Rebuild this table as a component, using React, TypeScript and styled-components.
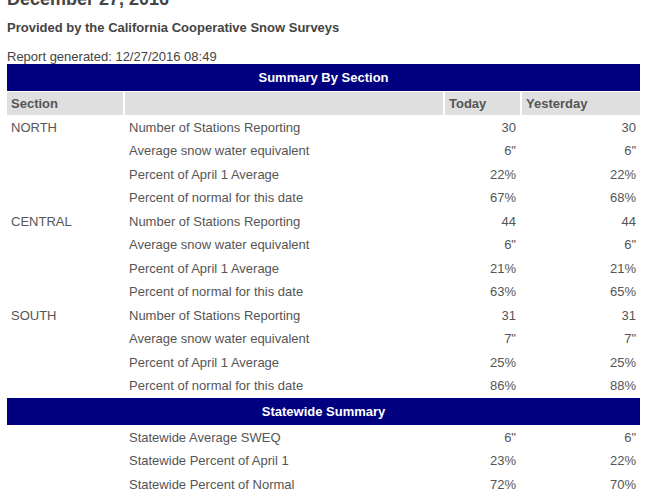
import React from "react"
import styled, { createGlobalStyle } from "styled-components"

const GlobalStyle = createGlobalStyle`
  body {
    margin: 0;
    background: #fff;
    font-family: "Liberation Sans", Arial, sans-serif;
    color: #555;
  }
`

type Row = { section?: string; label: string; today: string; yesterday: string }

const sections: Row[] = [
	{ section: "NORTH", label: "Number of Stations Reporting", today: "30", yesterday: "30" },
	{ label: "Average snow water equivalent", today: "6\"", yesterday: "6\"" },
	{ label: "Percent of April 1 Average", today: "22%", yesterday: "22%" },
	{ label: "Percent of normal for this date", today: "67%", yesterday: "68%" },
	{ section: "CENTRAL", label: "Number of Stations Reporting", today: "44", yesterday: "44" },
	{ label: "Average snow water equivalent", today: "6\"", yesterday: "6\"" },
	{ label: "Percent of April 1 Average", today: "21%", yesterday: "21%" },
	{ label: "Percent of normal for this date", today: "63%", yesterday: "65%" },
	{ section: "SOUTH", label: "Number of Stations Reporting", today: "31", yesterday: "31" },
	{ label: "Average snow water equivalent", today: "7\"", yesterday: "7\"" },
	{ label: "Percent of April 1 Average", today: "25%", yesterday: "25%" },
	{ label: "Percent of normal for this date", today: "86%", yesterday: "88%" },
]

const statewide: Row[] = [
	{ label: "Statewide Average SWEQ", today: "6\"", yesterday: "6\"" },
	{ label: "Statewide Percent of April 1", today: "23%", yesterday: "22%" },
	{ label: "Statewide Percent of Normal", today: "72%", yesterday: "70%" },
]

export default function App() {
	return (
		<Page>
			<GlobalStyle />
			<Title>December 27, 2016</Title>
			<Subtitle>Provided by the California Cooperative Snow Surveys</Subtitle>
			<Generated>Report generated: 12/27/2016 08:49</Generated>
			<Report>
				<colgroup>
					<col style={{ width: 116 }} />
					<col style={{ width: 318 }} />
					<col style={{ width: 75 }} />
					<col style={{ width: 118 }} />
				</colgroup>
				<tbody>
					<tr>
						<Banner colSpan={4}>Summary By Section</Banner>
					</tr>
					<tr>
						<HeadCell>Section</HeadCell>
						<HeadCell></HeadCell>
						<HeadCell>Today</HeadCell>
						<HeadCell>Yesterday</HeadCell>
					</tr>
					{sections.map((r, i) => (
						<tr key={i}>
							<Cell>{r.section}</Cell>
							<Cell>{r.label}</Cell>
							<Num>{r.today}</Num>
							<Num>{r.yesterday}</Num>
						</tr>
					))}
					<tr>
						<Banner colSpan={4}>Statewide Summary</Banner>
					</tr>
					{statewide.map((r, i) => (
						<tr key={i}>
							<Cell></Cell>
							<Cell>{r.label}</Cell>
							<Num>{r.today}</Num>
							<Num>{r.yesterday}</Num>
						</tr>
					))}
				</tbody>
			</Report>
		</Page>
	)
}

const Page = styled.div`
  padding-left: 7px;
  width: 672px;
  height: 504px;
  overflow: hidden;
  box-sizing: border-box;
`
const Title = styled.h1`
  margin: -11px 0 0;
  font-size: 18px;
  line-height: 21px;
  font-weight: bold;
  color: #444;
`
const Subtitle = styled.div`
  margin-top: 10px;
  font-size: 13px;
  line-height: 15px;
  font-weight: bold;
  color: #444;
`
const Generated = styled.div`
  margin-top: 15px;
  font-size: 13px;
  line-height: 14px;
  color: #444;
`
const Report = styled.table`
  margin: -1px 0 0 -2px;
  width: 637px;
  table-layout: fixed;
  border-collapse: separate;
  border-spacing: 2px 1px;
  font-size: 13px;
`
const Banner = styled.td`
  height: 27px;
  padding: 0;
  background: #000080;
  color: #fff;
  font-weight: bold;
  text-align: center;
`
const HeadCell = styled.td`
  height: 23px;
  padding: 0 4px;
  background: #dfdfdf;
  color: #555;
  font-weight: bold;
  text-align: left;
`
const Cell = styled.td`
  height: 22.5px;
  padding: 0 4px;
  color: #555;
  white-space: nowrap;
`
const Num = styled(Cell)`
  text-align: right;
`
